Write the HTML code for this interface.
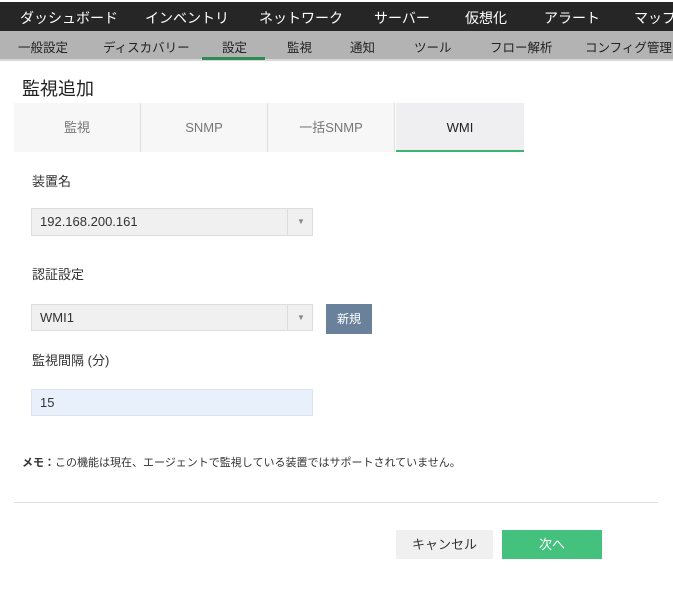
<!DOCTYPE html><html><head><meta charset="utf-8"><style>
body{margin:0;width:673px;height:603px;background:#fff;font-family:"Liberation Sans","Noto Sans CJK JP",sans-serif;position:relative;overflow:hidden;color:#333}
.a{position:absolute;white-space:nowrap}
.top{position:absolute;left:0;top:2px;width:673px;height:29px;background:#262626}
.sub{position:absolute;left:0;top:31px;width:673px;height:28px;background:#b3b3b3;border-bottom:2px solid #d8d8d8}
.tt{color:#fff;font-size:14px;top:8px}
.st{color:#222;font-size:12.5px;top:37px}
.tab{position:absolute;top:103px;height:49px;width:126px;background:#f7f7f7;border-right:1px solid #ddd;text-align:center;line-height:49px;font-size:13px;color:#777}
.sel{position:absolute;background:#f0f0f0;border:1px solid #ddd;box-sizing:border-box;font-size:13px;padding-left:8px;color:#333}
.lbl{font-size:13px;color:#333}
</style></head><body>
<div class="top"></div>
<div class="a tt" style="left:20px">ダッシュボード</div>
<div class="a tt" style="left:145px">インベントリ</div>
<div class="a tt" style="left:259px">ネットワーク</div>
<div class="a tt" style="left:374px">サーバー</div>
<div class="a tt" style="left:465px">仮想化</div>
<div class="a tt" style="left:544px">アラート</div>
<div class="a tt" style="left:634px">マップ</div>
<div class="sub"></div>
<div class="a st" style="left:18px">一般設定</div>
<div class="a st" style="left:103px">ディスカバリー</div>
<div class="a st" style="left:222px">設定</div>
<div class="a st" style="left:287px">監視</div>
<div class="a st" style="left:350px">通知</div>
<div class="a st" style="left:414px">ツール</div>
<div class="a st" style="left:490px">フロー解析</div>
<div class="a st" style="left:585px">コンフィグ管理</div>
<div class="a" style="left:202px;top:57px;width:63px;height:3px;background:#2e8b57"></div>
<div class="a" style="left:22px;top:75px;font-size:18px;color:#222">監視追加</div>
<div class="tab" style="left:14px">監視</div>
<div class="tab" style="left:141px">SNMP</div>
<div class="tab" style="left:268px">一括SNMP</div>
<div class="tab" style="left:396px;width:128px;border-right:none;background:#efeff1;color:#222;height:47px;border-bottom:2px solid #3cb371;line-height:49px">WMI</div>
<div class="a lbl" style="left:32px;top:171px">装置名</div>
<div class="sel" style="left:31px;top:208px;width:282px;height:28px;line-height:26px">192.168.200.161<span style="position:absolute;left:255px;top:0;width:26px;height:26px;border-left:1px solid #ddd;text-align:center;font-size:8px;color:#888">▼</span></div>
<div class="a lbl" style="left:32px;top:264px">認証設定</div>
<div class="sel" style="left:31px;top:304px;width:282px;height:27px;line-height:25px">WMI1<span style="position:absolute;left:255px;top:0;width:26px;height:25px;border-left:1px solid #ddd;text-align:center;font-size:8px;color:#888">▼</span></div>
<div class="a" style="left:326px;top:304px;width:46px;height:30px;background:#6a819c;color:#fff;font-size:12px;text-align:center;line-height:30px">新規</div>
<div class="a lbl" style="left:32px;top:350px">監視間隔 (分)</div>
<div class="sel" style="left:31px;top:389px;width:282px;height:27px;line-height:25px;background:#e8f0fc;border-color:#dde4ee">15</div>
<div class="a" style="left:22px;top:454px;font-size:11px;color:#333"><b>メモ：</b>この機能は現在、エージェントで監視している装置ではサポートされていません。</div>
<div class="a" style="left:14px;top:502px;width:644px;height:1px;background:#e2e2e2"></div>
<div class="a" style="left:396px;top:530px;width:97px;height:29px;background:#f0f0f0;font-size:13px;text-align:center;line-height:29px;color:#333">キャンセル</div>
<div class="a" style="left:502px;top:530px;width:100px;height:29px;background:#45c17e;font-size:13px;text-align:center;line-height:29px;color:#fff">次へ</div>
</body></html>
